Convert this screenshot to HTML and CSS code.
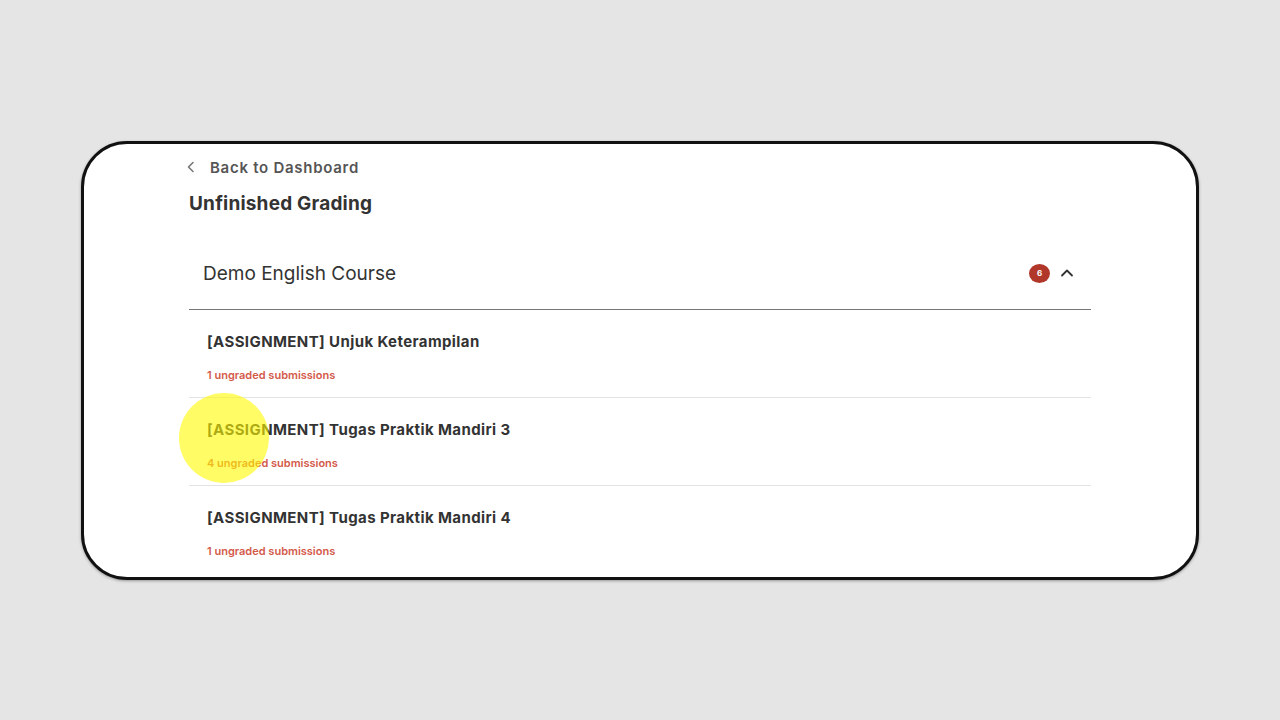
FILE: index.html
```html
<!DOCTYPE html>
<html lang="en">
<head>
<meta charset="utf-8">
<title>Unfinished Grading</title>
<link rel="stylesheet" href="styles.css">
</head>
<body>
<div class="device">
  <div class="content">
    <a class="back" href="#">
      <svg class="back-icon" width="10" height="12" viewBox="0 0 10 12"><path d="M7 1.5 L2.5 6 L7 10.5" fill="none" stroke="#777" stroke-width="1.6" stroke-linecap="round" stroke-linejoin="round"/></svg>
      <span>Back to Dashboard</span>
    </a>
    <h1 class="page-title">Unfinished Grading</h1>
    <div class="course">
      <div class="course-head">
        <span class="course-name">Demo English Course</span>
        <div class="course-meta">
          <span class="badge">6</span>
          <svg class="chev" width="14" height="10" viewBox="0 0 14 10"><path d="M2 7.5 L7 2.5 L12 7.5" fill="none" stroke="#333" stroke-width="1.8" stroke-linecap="round" stroke-linejoin="round"/></svg>
        </div>
      </div>
      <ul class="items">
        <li class="item">
          <div class="item-title">[ASSIGNMENT] Unjuk Keterampilan</div>
          <div class="item-sub">1 ungraded submissions</div>
        </li>
        <li class="item">
          <div class="item-title">[ASSIGNMENT] Tugas Praktik Mandiri 3</div>
          <div class="item-sub">4 ungraded submissions</div>
        </li>
        <li class="item">
          <div class="item-title">[ASSIGNMENT] Tugas Praktik Mandiri 4</div>
          <div class="item-sub">1 ungraded submissions</div>
        </li>
      </ul>
    </div>
  </div>
  <div class="tap"></div>
</div>
</body>
</html>
```
FILE: styles.css
```css
* { box-sizing: border-box; }
html, body { margin: 0; padding: 0; }
body {
  background: #e5e5e5;
  font-family: Inter, "Noto Sans", Arial, sans-serif;
  width: 1280px;
  height: 720px;
  overflow: hidden;
  padding-top: 141px;
}
.device {
  position: relative;
  margin-left: 81px;
  width: 1118px;
  height: 439px;
  background: #fff;
  border: 3px solid #111;
  border-radius: 46px;
  overflow: hidden;
  box-shadow: 0 1px 3px rgba(0,0,0,0.35);
}
.content {
  padding: 12px 0 0 105px;
  width: 1007px;
}
.back {
  display: flex;
  align-items: center;
  height: 22px;
  color: #555;
  text-decoration: none;
  font-size: 15px;
  font-weight: 600;
  letter-spacing: 0.72px;
  gap: 14px;
}
.back-icon { margin-left: -3px; }
.page-title {
  margin: 14px 0 0 0;
  font-size: 19px;
  line-height: 24px;
  font-weight: 700;
  letter-spacing: 0.2px;
  color: #333;
}
.course { margin-top: 21px; }
.course-head {
  display: flex;
  align-items: center;
  justify-content: space-between;
  height: 73px;
  padding: 0 17px 0 14px;
  border-bottom: 1px solid #777;
}
.course-name {
  font-size: 19px;
  color: #333;
  font-weight: 400;
}
.course-meta {
  display: flex;
  align-items: center;
  gap: 10px;
}
.badge {
  width: 21px;
  height: 19px;
  border-radius: 50%;
  background: #b1372b;
  color: #fff;
  font-size: 8px;
  font-weight: 700;
  display: flex;
  align-items: center;
  justify-content: center;
}
.chev { display: block; }
.items { list-style: none; margin: 0; padding: 0; }
.item {
  padding: 22px 18px 15px 18px;
  border-bottom: 1px solid #e3e3e3;
}
.item:last-child { border-bottom: none; }
.item-title {
  font-size: 15px;
  line-height: 20px;
  font-weight: 700;
  letter-spacing: 0.4px;
  color: #333;
}
.item-sub {
  margin-top: 17px;
  font-size: 11px;
  line-height: 13px;
  font-weight: 600;
  color: #d35a4a;
}
.tap {
  position: absolute;
  left: 95px;
  top: 249px;
  width: 90px;
  height: 90px;
  border-radius: 50%;
  background: rgba(255, 250, 0, 0.6);
}
```
